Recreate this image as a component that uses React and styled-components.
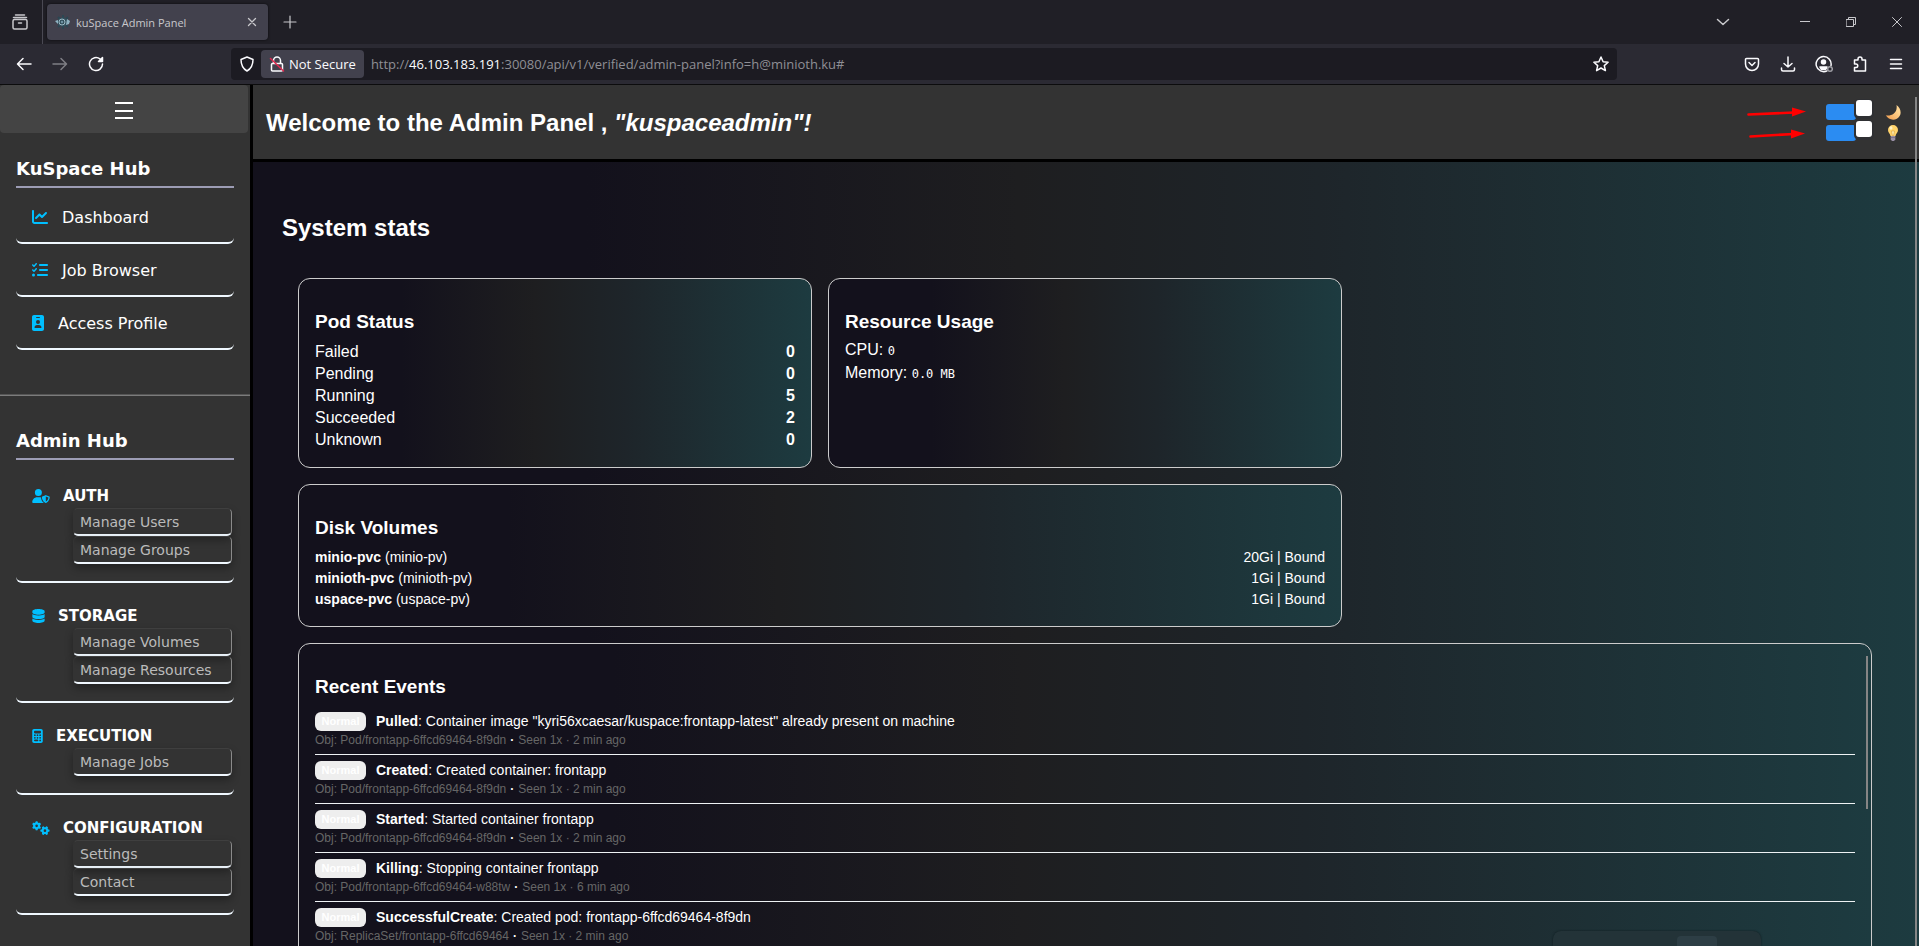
import React from "react";
import styled, { createGlobalStyle, css } from "styled-components";
import {
  FaChartLine,
  FaListCheck,
  FaIdBadge,
  FaUserShield,
  FaDatabase,
  FaCalculator,
  FaGears,
} from "react-icons/fa6";

const sans = `"Liberation Sans", Arial, sans-serif`;
const wide = `Verdana, "DejaVu Sans", sans-serif`;
const chrome = `"Segoe UI", "Open Sans", "Noto Sans", sans-serif`;
const fade = `linear-gradient(90deg, #13111c 20%, #1e1e20 46%, #1e252a 64%, #1d3b40 100%)`;

const GlobalStyle = createGlobalStyle`
  *, *::before, *::after { box-sizing: border-box; }
  body { margin: 0; background: #13111c; color: #fff; font-family: ${sans}; }
  h1, h2, h3, ul, p { margin: 0; padding: 0; }
  ul { list-style: none; }
  a { color: inherit; text-decoration: none; }
  button { border: 0; padding: 0; background: none; color: inherit; font: inherit; }
`;

const Window = styled.div`
  display: flex;
  flex-direction: column;
  height: 100vh;
  overflow: hidden;
`;

/* ---------- browser frame ---------- */

const TabStrip = styled.div`
  display: flex;
  align-items: center;
  flex: none;
  height: 44px;
  background: #201f26;
  color: #c8c8cc;
  font-family: ${chrome};
`;

const RecentCell = styled.div`
  display: flex;
  align-items: center;
  width: 43px;
  height: 44px;
  padding-left: 12px;
  border-right: 1px solid #4a4953;
`;

const Tab = styled.div`
  display: flex;
  align-items: center;
  width: 221px;
  height: 36px;
  margin-left: 4px;
  padding: 0 10px 0 8px;
  border-radius: 4px;
  background: #42414d;
  box-shadow: 0 0 3px #000000aa;
  font-size: 11px;
`;

const TabTitle = styled.span`
  flex: 1;
  margin-left: 5px;
  white-space: nowrap;
`;

const IconButton = styled.button`
  display: flex;
  align-items: center;
  justify-content: center;
  width: ${(p) => p.$w || 36}px;
  height: 32px;
  opacity: ${(p) => (p.disabled ? 0.4 : 1)};
`;

const Spacer = styled.div`
  flex: 1;
`;

const WindowControls = styled.div`
  display: flex;
  margin-left: 30px;
`;

const NavBar = styled.div`
  display: flex;
  align-items: center;
  flex: none;
  height: 41px;
  padding: 0 5px 1px 6px;
  background: #2b2a33;
  border-bottom: 1px solid #0c0c0d;
  color: #fbfbfe;
  font-family: ${chrome};
  font-size: 13px;
`;

const AddressBar = styled.div`
  display: flex;
  align-items: center;
  flex: 1;
  height: 32px;
  margin: 0 117px;
  padding-left: 2px;
  border-radius: 4px;
  background: #1c1b22;
`;

const SecurityChip = styled.button`
  display: flex;
  align-items: center;
  gap: 4px;
  height: 28px;
  padding: 0 8px;
  border-radius: 4px;
  background: #42414d;
  white-space: nowrap;
`;

const Address = styled.div`
  flex: 1;
  margin-left: 7px;
  color: #8f8f95;
  white-space: nowrap;
  b {
    color: #fbfbfe;
    font-weight: 400;
  }
`;

const Line = ({ w = 16, h = 16, sw = 1.5, children }) => (
  <svg
    width={w}
    height={h}
    viewBox={`0 0 ${w} ${h}`}
    fill="none"
    stroke="currentColor"
    strokeWidth={sw}
    strokeLinecap="round"
    strokeLinejoin="round"
    aria-hidden="true"
  >
    {children}
  </svg>
);

const Favicon = () => (
  <svg width="16" height="16" viewBox="0 0 16 16" aria-hidden="true">
    <path d="M3 3l2 2M8 1v3M13 3l-2 2M3 13l2-2M8 15v-3M13 13l-2-2M1 8h3" stroke="#2b4652" strokeWidth="2" />
    <ellipse cx="7.500" cy="8" rx="5" ry="4.500" fill="#33505c" />
    <path d="M0 7l3-1v4zM12 5l3 2-1 3-3 1z" fill="#8fb3c2" />
    <circle cx="7" cy="8" r="3" fill="none" stroke="#9bb9c5" strokeWidth="1" />
    <circle cx="7" cy="8" r="1.200" fill="#6f93a3" />
  </svg>
);

function BrowserFrame() {
  return (
    <>
      <TabStrip>
        <RecentCell>
          <Line>
            <path d="M3.500 1h9M1.500 3.500h13M2.500 5.500h11a1.500 1.500 0 0 1 1.500 1.500v6.500a1.500 1.500 0 0 1-1.500 1.500h-11a1.500 1.500 0 0 1-1.500-1.500V7a1.500 1.500 0 0 1 1.500-1.500zM6.500 9h3" />
          </Line>
        </RecentCell>
        <Tab>
          <Favicon />
          <TabTitle>kuSpace Admin Panel</TabTitle>
          <IconButton $w={12} aria-label="Close tab">
            <Line w={10} h={10} sw={1.3}>
              <path d="M1.500 1.500l7 7M8.500 1.500l-7 7" />
            </Line>
          </IconButton>
        </Tab>
        <IconButton $w={43} aria-label="New tab">
          <Line w={14} h={14} sw={1.2}>
            <path d="M7 1v12M1 7h12" />
          </Line>
        </IconButton>
        <Spacer />
        <IconButton $w={58} aria-label="List tabs">
          <Line w={14} h={8}>
            <path d="M1.500 1.500L7 6.500l5.500-5" />
          </Line>
        </IconButton>
        <WindowControls>
          <IconButton $w={46} aria-label="Minimise">
            <Line w={10} h={10} sw={1}>
              <path d="M0 4.500h10" />
            </Line>
          </IconButton>
          <IconButton $w={46} aria-label="Restore">
            <Line w={10} h={10} sw={1}>
              <path d="M.5 2.500h7v7h-7zM2.500 2.500v-2h7v7h-2" />
            </Line>
          </IconButton>
          <IconButton $w={45} aria-label="Close window">
            <Line w={10} h={10} sw={1}>
              <path d="M.5.5l9 9M9.500.5l-9 9" />
            </Line>
          </IconButton>
        </WindowControls>
      </TabStrip>
      <NavBar>
        <IconButton aria-label="Back">
          <Line>
            <path d="M15 8H2M7 2.500L1.500 8 7 13.500" />
          </Line>
        </IconButton>
        <IconButton aria-label="Forward" disabled>
          <Line>
            <path d="M1 8h13M9 2.500L14.500 8 9 13.500" />
          </Line>
        </IconButton>
        <IconButton aria-label="Reload">
          <Line>
            <path d="M14.500 8A6.500 6.500 0 1 1 12 2.900" />
            <path d="M14.500 1.500v4h-4z" fill="currentColor" />
          </Line>
        </IconButton>
        <AddressBar>
          <IconButton $w={28} aria-label="Tracking protection">
            <Line>
              <path d="M8 1l6 2.500c0 5-1.500 9-6 11.500-4.500-2.500-6-6.500-6-11.500z" />
            </Line>
          </IconButton>
          <SecurityChip>
            <Line>
              <path d="M4.500 7V4.500a3.500 3.500 0 0 1 7 0V7M3.500 7.500h9a1 1 0 0 1 1 1v5.500a1 1 0 0 1-1 1h-9a1 1 0 0 1-1-1V8.500a1 1 0 0 1 1-1z" />
              <path d="M1.500 2.500l13 12.500" stroke="#e22850" />
            </Line>
            Not Secure
          </SecurityChip>
          <Address role="textbox" aria-label="Address">
            http://<b>46.103.183.191</b>:30080/api/v1/verified/admin-panel?info=h@minioth.ku#
          </Address>
          <IconButton $w={32} aria-label="Bookmark">
            <Line>
              <path d="M8 1l2.100 4.700 5 .5-3.800 3.400 1.100 5L8 12l-4.400 2.600 1.100-5L.9 6.200l5-.5z" />
            </Line>
          </IconButton>
        </AddressBar>
        <IconButton aria-label="Pocket">
          <Line>
            <path d="M2.500 2.500h11a1 1 0 0 1 1 1V8a6.500 6.500 0 0 1-13 0V3.500a1 1 0 0 1 1-1zM5 6.500l3 3 3-3" />
          </Line>
        </IconButton>
        <IconButton aria-label="Downloads">
          <Line>
            <path d="M8 1v10M4 7.500L8 11l4-3.500M1.500 12v1.500A1.500 1.500 0 0 0 3 15h10a1.500 1.500 0 0 0 1.500-1.500V12" />
          </Line>
        </IconButton>
        <IconButton aria-label="Account">
          <Line w={18} h={18}>
            <path d="M12 15.800A7.500 7.500 0 1 1 16 10.500" />
            <circle cx="8.500" cy="7" r="2" fill="currentColor" />
            <path d="M5 12h7l-1.500 2.500h-4z" fill="currentColor" />
            <circle cx="15" cy="14" r="2.300" stroke="#a0a0a6" />
          </Line>
        </IconButton>
        <IconButton aria-label="Extensions">
          <Line>
            <path d="M6 4V3a2 2 0 0 1 4 0v1h3.500v11h-11v-3.500h1.500a1.500 1.500 0 0 0 0-3.500H2.500V4z" />
          </Line>
        </IconButton>
        <IconButton aria-label="Menu">
          <Line w={14} h={12}>
            <path d="M1.500 1.500h11M1.500 6h11M1.500 10.500h11" />
          </Line>
        </IconButton>
      </NavBar>
    </>
  );
}

/* ---------- sidebar ---------- */

const Page = styled.div`
  position: relative;
  display: flex;
  flex: 1;
  min-height: 0;
`;

const Sidebar = styled.aside`
  flex: none;
  width: 253px;
  background: #333;
  border-right: 3px solid #000;
  font-family: ${wide};
`;

const MenuToggle = styled.button`
  display: flex;
  align-items: center;
  justify-content: center;
  width: 248px;
  height: 48px;
  padding-top: 4px;
  background: #444;
  border-radius: 4px;
`;

const HubSection = styled.nav`
  padding: ${(p) => p.$top}px 16px 0;
`;

const HubTitle = styled.h2`
  margin-bottom: 3px;
  padding-bottom: 6px;
  border-bottom: 2px solid #9c9cb4;
  font-size: 18px;
  line-height: 23px;
`;

const bottomEdge = css`
  border-bottom: 2px solid aliceblue;
  border-radius: 6px;
`;

const HubLink = styled.a`
  display: flex;
  align-items: center;
  gap: 14px;
  height: 53px;
  padding: 1px 0 0 16px;
  font-size: 16px;
  ${bottomEdge}
  svg {
    width: ${(p) => p.$icon}px;
    height: 16px;
    color: #00bfff;
  }
`;

const Divider = styled.hr`
  margin: 44px 0 0;
  border: 0;
  border-top: 1px solid #555;
  border-bottom: 1px solid #7c7c7c;
`;

const Group = styled.section`
  padding: 23px 0 16px;
  ${bottomEdge}
`;

const GroupTitle = styled.h3`
  display: flex;
  align-items: center;
  gap: 13px;
  padding-left: 16px;
  font-size: 15px;
  line-height: 20px;
  svg {
    width: ${(p) => p.$icon}px;
    height: 14px;
    color: #00bfff;
  }
`;

const GroupList = styled.ul`
  margin: 2px 2px 0 57px;
  padding-bottom: 1px;
`;

const GroupLink = styled.a`
  display: block;
  height: 28px;
  padding-left: 6px;
  border: 1px solid #3f3f3f;
  border-right-color: #8a8a8a;
  border-left-color: #333;
  border-bottom: 2px solid aliceblue;
  border-radius: 5px;
  box-shadow: 0 4px 8px #00000055;
  color: #bbb;
  font-size: 14px;
  line-height: 26px;
`;

const hubLinks = [
  { label: "Dashboard", Icon: FaChartLine, width: 16 },
  { label: "Job Browser", Icon: FaListCheck, width: 16 },
  { label: "Access Profile", Icon: FaIdBadge, width: 12 },
];

const adminGroups = [
  { title: "AUTH", Icon: FaUserShield, width: 18, links: ["Manage Users", "Manage Groups"] },
  { title: "STORAGE", Icon: FaDatabase, width: 13, links: ["Manage Volumes", "Manage Resources"] },
  { title: "EXECUTION", Icon: FaCalculator, width: 11, links: ["Manage Jobs"] },
  { title: "CONFIGURATION", Icon: FaGears, width: 18, links: ["Settings", "Contact"] },
];

function SideNav() {
  return (
    <Sidebar>
      <MenuToggle aria-label="Toggle sidebar">
        <svg width="18" height="18" viewBox="0 0 18 18" fill="#fff" aria-hidden="true">
          <path d="M0 0h18v2H0zM0 8h18v2H0zM0 15h18v2H0z" />
        </svg>
      </MenuToggle>
      <HubSection $top={24}>
        <HubTitle>KuSpace Hub</HubTitle>
        {hubLinks.map(({ label, Icon, width }) => (
          <HubLink key={label} href="#" $icon={width}>
            <Icon />
            {label}
          </HubLink>
        ))}
      </HubSection>
      <Divider />
      <HubSection $top={33}>
        <HubTitle>Admin Hub</HubTitle>
        {adminGroups.map(({ title, Icon, width, links }) => (
          <Group key={title}>
            <GroupTitle $icon={width}>
              <Icon />
              {title}
            </GroupTitle>
            <GroupList>
              {links.map((l) => (
                <li key={l}>
                  <GroupLink href="#">{l}</GroupLink>
                </li>
              ))}
            </GroupList>
          </Group>
        ))}
      </HubSection>
    </Sidebar>
  );
}

/* ---------- main area ---------- */

const Content = styled.div`
  display: flex;
  flex-direction: column;
  flex: 1;
  min-width: 0;
`;

const Banner = styled.header`
  display: flex;
  align-items: center;
  flex: none;
  height: 77px;
  padding: 0 18px 0 13px;
  background: #333;
  border-bottom: 3px solid #000;
`;

const BannerTitle = styled.h1`
  flex: 1;
  padding-top: 2px;
  font-size: 24px;
  line-height: 28px;
`;

const Arrows = styled.svg`
  margin-right: 20px;
`;

const Switches = styled.div`
  display: flex;
  flex-direction: column;
  gap: 5px;
`;

const SwitchLabel = styled.label`
  display: flex;
  align-items: center;
  justify-content: space-between;
  width: 75px;
  height: 16px;
`;

const Switch = styled.input`
  position: relative;
  appearance: none;
  width: 30px;
  height: 16px;
  margin: 0;
  border-radius: 3px;
  background: #2b8cf2;
  &::before {
    content: "";
    position: absolute;
    top: -4px;
    left: 30px;
    width: 16px;
    height: 16px;
    border-radius: 3px;
    background: #fff;
    box-shadow: 0 1px 0 2px #2f3033;
  }
`;

const Main = styled.main`
  flex: 1;
  min-height: 0;
  padding: 50px 31px 0 29px;
  background: ${fade};
  overflow: hidden;
`;

const SectionTitle = styled.h2`
  font-size: 24px;
  line-height: 32px;
`;

const CardGrid = styled.div`
  display: grid;
  grid-template-columns: repeat(3, 1fr);
  gap: 16px;
  padding: 34px 16px 16px;
`;

const Card = styled.section`
  position: relative;
  grid-column: span ${(p) => p.$span || 1};
  min-height: ${(p) => p.$min || 0}px;
  padding: 16px;
  border: 1px solid #ccc;
  border-radius: 12px;
  background: ${fade};
`;

const CardTitle = styled.h3`
  margin: 16px 0 6px;
  font-size: 19px;
  line-height: 21px;
`;

const StatList = styled.ul`
  padding-top: 3px;
  font-size: ${(p) => p.$size}px;
  line-height: ${(p) => p.$row}px;
`;

const StatRow = styled.li`
  display: flex;
  justify-content: space-between;
`;

const UsageRow = styled.p`
  font-size: 16px;
  line-height: 23px;
  code {
    font-family: "DejaVu Sans Mono", monospace;
    font-size: 12px;
    line-height: 16px;
  }
`;

const EventList = styled.ul`
  padding-top: 3px;
`;

const EventRow = styled.li`
  padding: 5px 0;
  border-bottom: 1px solid #eef2f4;
`;

const EventHead = styled.div`
  display: flex;
  align-items: center;
  gap: 10px;
  height: 20px;
  font-size: 14px;
`;

const Badge = styled.span`
  width: 51px;
  height: 19px;
  border-radius: 6px;
  background: #eee;
  color: #fff;
  font-size: 11px;
  font-weight: 700;
  line-height: 19px;
  text-align: center;
`;

const EventMeta = styled.div`
  display: flex;
  gap: 4px;
  font-size: 12px;
  line-height: 18px;
  span {
    color: #666;
  }
`;

const Thumb = styled.div`
  position: absolute;
  background: #858585;
  width: 2px;
  ${(p) =>
    p.$page
      ? css`
          top: 12px;
          right: 2px;
          bottom: 0;
        `
      : css`
          top: 12px;
          right: 3px;
          height: 153px;
        `}
`;

const Overlay = styled.div`
  position: absolute;
  right: 158px;
  bottom: 0;
  display: flex;
  justify-content: flex-end;
  width: 208px;
  height: 15px;
  padding: 5px 44px 0 0;
  border-radius: 8px 8px 0 0;
  background: #233338;
  box-shadow: 0 0 2px #0c1a1e;
`;

const OverlayTile = styled.div`
  width: 40px;
  border-radius: 4px 4px 0 0;
  background: #2d3e45;
`;

const Moon = () => (
  <svg width="16" height="16" viewBox="0 0 16 16" aria-hidden="true">
    <defs>
      <linearGradient id="moon" x1="1" y1="0" x2="0" y2="1">
        <stop offset="0.300" stopColor="#ffd590" />
        <stop offset="1" stopColor="#f09a4c" />
      </linearGradient>
    </defs>
    <path d="M11.500 1C15 3.500 16.800 8 14.800 11.800 11.500 17.500 3.500 16.500.8 11.300 6 12.500 13 9 11.500 1z" fill="url(#moon)" />
  </svg>
);

const Bulb = () => (
  <svg width="16" height="16" viewBox="0 0 16 16" aria-hidden="true">
    <path d="M8 0a5 5 0 0 1 5 5c0 2.500-2 3.500-2.500 6h-5C5 8.500 3 7.500 3 5a5 5 0 0 1 5-5z" fill="#ffd36b" />
    <path d="M6.500 6l1 5h1l1-5z" fill="#fff2b8" stroke="#d99b3a" strokeWidth="0.600" />
    <ellipse cx="6" cy="3" rx="1.500" ry="1.800" fill="#fff3c4" />
    <path d="M5.700 11h4.600v3.500L9 16H7l-1.300-1.500z" fill="#9a8fa6" />
    <path d="M5.700 12.500h4.600" stroke="#6f6580" strokeWidth="0.700" />
  </svg>
);

const pods = [
  ["Failed", 0],
  ["Pending", 0],
  ["Running", 5],
  ["Succeeded", 2],
  ["Unknown", 0],
];

const volumes = [
  ["minio-pvc", "minio-pv", "20Gi | Bound"],
  ["minioth-pvc", "minioth-pv", "1Gi | Bound"],
  ["uspace-pvc", "uspace-pv", "1Gi | Bound"],
];

const events = [
  ["Pulled", 'Container image "kyri56xcaesar/kuspace:frontapp-latest" already present on machine', "Pod/frontapp-6ffcd69464-8f9dn", "2 min ago"],
  ["Created", "Created container: frontapp", "Pod/frontapp-6ffcd69464-8f9dn", "2 min ago"],
  ["Started", "Started container frontapp", "Pod/frontapp-6ffcd69464-8f9dn", "2 min ago"],
  ["Killing", "Stopping container frontapp", "Pod/frontapp-6ffcd69464-w88tw", "6 min ago"],
  ["SuccessfulCreate", "Created pod: frontapp-6ffcd69464-8f9dn", "ReplicaSet/frontapp-6ffcd69464", "2 min ago"],
];

export default function App() {
  return (
    <Window>
      <GlobalStyle />
      <BrowserFrame />
      <Page>
        <SideNav />
        <Content>
          <Banner>
            <BannerTitle>
              Welcome to the Admin Panel , <i>"kuspaceadmin"!</i>
            </BannerTitle>
            <Arrows width="60" height="34" viewBox="0 0 60 34" aria-hidden="true">
              <path d="M2.500 9.500L48 7.500M4.500 31.500L48 29" stroke="#f00" strokeWidth="2.600" strokeLinecap="round" />
              <path d="M46 2.500l14 4-14 5zM45 24.500l14 4-14 5z" fill="#f00" />
            </Arrows>
            <Switches>
              <SwitchLabel>
                <Switch type="checkbox" defaultChecked aria-label="Dark mode" />
                <Moon />
              </SwitchLabel>
              <SwitchLabel>
                <Switch type="checkbox" defaultChecked aria-label="Lights" />
                <Bulb />
              </SwitchLabel>
            </Switches>
          </Banner>
          <Main>
            <SectionTitle>System stats</SectionTitle>
            <CardGrid>
              <Card>
                <CardTitle>Pod Status</CardTitle>
                <StatList $size={16} $row={22}>
                  {pods.map(([name, count]) => (
                    <StatRow key={name}>
                      {name}
                      <b>{count}</b>
                    </StatRow>
                  ))}
                </StatList>
              </Card>
              <Card>
                <CardTitle>Resource Usage</CardTitle>
                <UsageRow>
                  CPU: <code>0</code>
                </UsageRow>
                <UsageRow>
                  Memory: <code>0.0 MB</code>
                </UsageRow>
              </Card>
              <Card $span={2}>
                <CardTitle>Disk Volumes</CardTitle>
                <StatList $size={14} $row={21}>
                  {volumes.map(([claim, volume, state]) => (
                    <StatRow key={claim}>
                      <span>
                        <b>{claim}</b> ({volume})
                      </span>
                      {state}
                    </StatRow>
                  ))}
                </StatList>
              </Card>
              <Card $span={3} $min={400}>
                <CardTitle>Recent Events</CardTitle>
                <EventList>
                  {events.map(([reason, message, object, age]) => (
                    <EventRow key={reason}>
                      <EventHead>
                        <Badge>Normal</Badge>
                        <span>
                          <b>{reason}</b>: {message}
                        </span>
                      </EventHead>
                      <EventMeta>
                        <span>Obj: {object}</span>
                        <b>·</b>
                        <span>Seen 1x · {age}</span>
                      </EventMeta>
                    </EventRow>
                  ))}
                </EventList>
                <Thumb />
              </Card>
            </CardGrid>
          </Main>
        </Content>
        <Thumb $page />
        <Overlay>
          <OverlayTile />
        </Overlay>
      </Page>
    </Window>
  );
}
